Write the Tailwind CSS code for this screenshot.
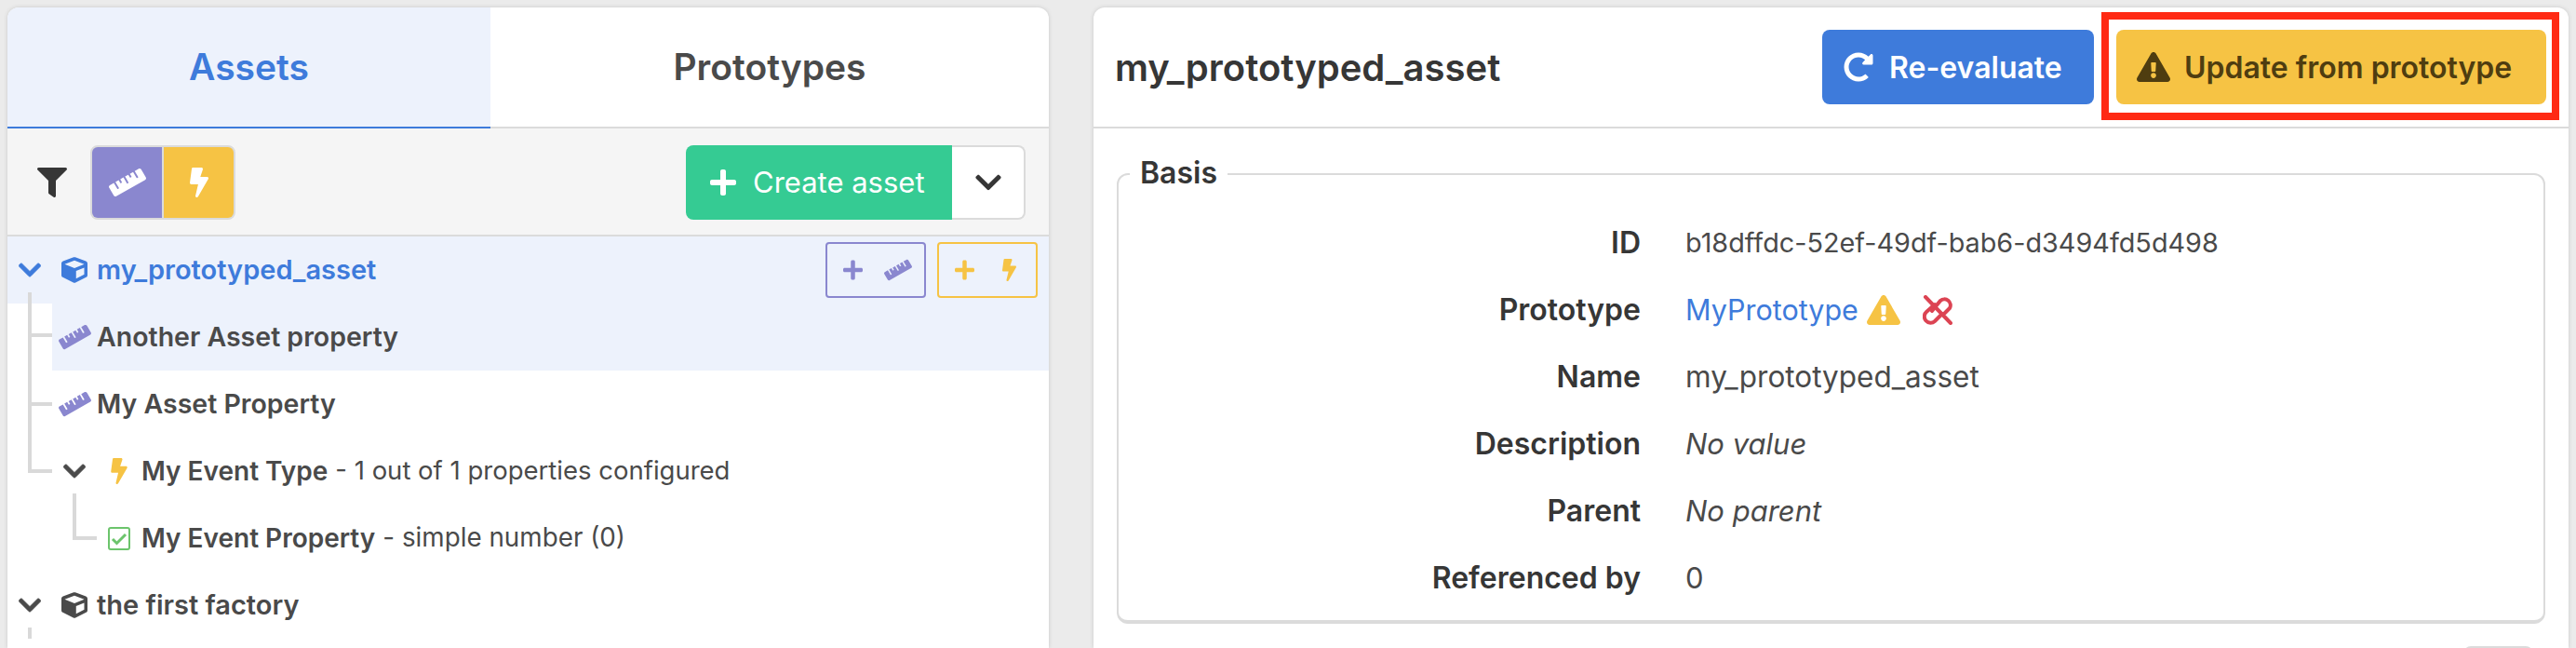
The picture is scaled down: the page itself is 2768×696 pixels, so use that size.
<!DOCTYPE html>
<html lang="en">
<head>
    <meta charset="UTF-8">
    <title>Assets</title>
    <script src="https://cdn.jsdelivr.net/npm/@tailwindcss/browser@4"></script>
</head>
<body class="bg-[#ebebeb] font-['Inter',sans-serif] text-[28px] text-[#4a4a4a]">
    <div class="flex gap-[48px] h-[696px] w-[2768px] pt-[8px] pl-[8px] overflow-hidden">

        <!-- left panel -->
        <div class="w-[1119px] bg-white rounded-t-[12px] overflow-hidden shadow-[0_0_4px_#c8c8c8]">
            <div class="flex h-[130px] text-[39px] font-semibold">
                <div class="w-[519px] flex items-center justify-center bg-[#edf2fc] text-[#3e7bdb] border-b-2 border-[#3e7bdb]">Assets</div>
                <div class="flex-1 flex items-center justify-center text-[#4a4a4a] border-b-2 border-[#dbdbdb]">Prototypes</div>
            </div>

            <div class="flex items-center h-[116px] pt-[2px] pl-[32px] pr-[25px] bg-[#f5f5f5] border-b-2 border-[#dbdbdb]">
                <svg class="w-[32px] h-[32px] fill-current text-[#363636]" viewBox="0 0 512 512"><path d="M487.976 0H24.028C2.71 0-8.047 25.866 7.058 40.971L192 225.941V432c0 7.831 3.821 15.17 10.237 19.662l80 55.98C298.02 518.69 320 507.493 320 487.98V225.941l184.947-184.97C520.021 25.896 509.338 0 487.976 0z"/></svg>
                <div class="ml-[25px] flex h-[80px] w-[156px] border-2 border-[#dbdbdb] rounded-[8px] overflow-hidden bg-[#dbdbdb] gap-[2px]">
                    <div class="flex-1 flex items-center justify-center bg-[#8a87cf]">
                        <svg class="w-[40px] h-[32px] fill-current text-white" viewBox="0 0 640 512"><path d="M635.7 167.2L556.1 31.7c-8.8-15-28.3-20.1-43.5-11.5l-69 39.1L503.3 161c2.2 3.8.9 8.5-2.9 10.7l-13.8 7.8c-3.8 2.2-8.7.9-10.9-2.9L416 75l-55.2 31.3 27.9 47.4c2.2 3.8.9 8.5-2.9 10.7l-13.8 7.8c-3.8 2.2-8.7.9-10.9-2.9L333.2 122 278 153.3 337.8 255c2.2 3.8.9 8.5-2.9 10.7l-13.8 7.8c-3.8 2.2-8.7.9-10.9-2.9l-59.7-101.7-55.2 31.3 27.9 47.4c2.2 3.8.9 8.5-2.9 10.7l-13.8 7.8c-3.8 2.2-8.7.9-10.9-2.9l-27.9-47.3-55.2 31.3 59.7 101.7c2.2 3.8.9 8.5-2.9 10.7l-13.8 7.8c-3.8 2.2-8.7.9-10.9-2.9L84.9 262.9l-69 39.1C.7 310.7-4.6 329.8 4.2 344.8l79.6 135.6c8.8 15 28.3 20.1 43.5 11.5L624.1 210c15.2-8.6 20.4-27.8 11.6-42.8z"/></svg>
                    </div>
                    <div class="flex-1 flex items-center justify-center bg-[#f6c344]">
                        <svg class="w-[20px] h-[32px] fill-current text-white" viewBox="0 0 320 512"><path d="M296 160H180.6l42.6-129.8C227.2 15 215.7 0 200 0H56C44 0 33.8 8.9 32.2 20.8l-32 240C-1.7 275.2 9.5 288 24 288h118.7L96.6 482.5c-3.6 15.2 8 29.5 23.3 29.5 8.4 0 16.4-4.4 20.8-12l176-304c9.3-15.9-2.2-36-20.7-36z"/></svg>
                    </div>
                </div>
                <div class="ml-auto flex h-[80px]">
                    <div class="w-[286px] flex items-center gap-[18px] pl-[26px] bg-[#35cb93] text-white text-[31px] rounded-l-[8px]">
                        <svg class="w-[28px] h-[32px] fill-current" viewBox="0 0 448 512"><path d="M416 208H272V64c0-17.67-14.33-32-32-32h-32c-17.67 0-32 14.33-32 32v144H32c-17.67 0-32 14.33-32 32v32c0 17.67 14.33 32 32 32h144v144c0 17.67 14.33 32 32 32h32c17.67 0 32-14.33 32-32V304h144c17.67 0 32-14.33 32-32v-32c0-17.67-14.33-32-32-32z"/></svg>
                        <span>Create asset</span>
                    </div>
                    <div class="w-[79px] flex items-center justify-center bg-white border-2 border-l-0 border-[#dbdbdb] rounded-r-[8px]">
                        <svg class="w-[28px] h-[32px] fill-current text-[#363636]" viewBox="0 0 448 512"><path d="M207.029 381.476L12.686 187.132c-9.373-9.373-9.373-24.569 0-33.941l22.667-22.667c9.357-9.357 24.522-9.375 33.901-.04L224 284.505l154.745-154.021c9.379-9.335 24.544-9.317 33.901.04l22.667 22.667c9.373 9.373 9.373 24.569 0 33.941L240.971 381.476c-9.373 9.372-24.569 9.372-33.942 0z"/></svg>
                    </div>
                </div>
            </div>

            <!-- tree -->
            <div class="font-semibold">
                <div class="relative flex items-center h-[72px] bg-[#edf2fc] text-[#3e7bdb] pl-[12px] pr-[12px]">
                    <svg class="w-[24px] h-[28px] fill-current stroke-current stroke-[14]" viewBox="0 0 448 512"><path d="M207.029 381.476L12.686 187.132c-9.373-9.373-9.373-24.569 0-33.941l22.667-22.667c9.357-9.357 24.522-9.375 33.901-.04L224 284.505l154.745-154.021c9.379-9.335 24.544-9.317 33.901.04l22.667 22.667c9.373 9.373 9.373 24.569 0 33.941L240.971 381.476c-9.373 9.372-24.569 9.372-33.942 0z"/></svg>
                    <svg class="ml-[22px] w-[28px] h-[28px] fill-current" viewBox="0 0 512 512"><path d="M239.1 6.3l-208 78c-18.7 7-31.1 25-31.1 45v225.1c0 18.2 10.3 34.8 26.5 42.9l208 104c13.5 6.8 29.4 6.8 42.9 0l208-104c16.3-8.1 26.5-24.8 26.5-42.9V129.3c0-20-12.4-37.9-31.1-44.9l-208-78C262 2.2 250 2.2 239.1 6.3zM256 68.4l192 72v1.1l-192 78-192-78v-1.1l192-72zm32 356V275.5l160-65v133.9l-160 80z"/></svg>
                    <span class="ml-[10px] text-[29px]">my_prototyped_asset</span>
                    <div class="ml-auto flex gap-[12px]">
                        <div class="w-[108px] h-[60px] flex items-center gap-[23px] pl-[17px] border-2 border-[#8a87cf] rounded-[4px] text-[#8a87cf]">
                            <svg class="w-[21px] h-[24px] fill-current" viewBox="0 0 448 512"><path d="M416 208H272V64c0-17.67-14.33-32-32-32h-32c-17.67 0-32 14.33-32 32v144H32c-17.67 0-32 14.33-32 32v32c0 17.67 14.33 32 32 32h144v144c0 17.67 14.33 32 32 32h32c17.67 0 32-14.33 32-32V304h144c17.67 0 32-14.33 32-32v-32c0-17.67-14.33-32-32-32z"/></svg>
                            <svg class="w-[30px] h-[24px] fill-current" viewBox="0 0 640 512"><path d="M635.7 167.2L556.1 31.7c-8.8-15-28.3-20.1-43.5-11.5l-69 39.1L503.3 161c2.2 3.8.9 8.5-2.9 10.7l-13.8 7.8c-3.8 2.2-8.7.9-10.9-2.9L416 75l-55.2 31.3 27.9 47.4c2.2 3.8.9 8.5-2.9 10.7l-13.8 7.8c-3.8 2.2-8.7.9-10.9-2.9L333.2 122 278 153.3 337.8 255c2.2 3.8.9 8.5-2.9 10.7l-13.8 7.8c-3.8 2.2-8.7.9-10.9-2.9l-59.7-101.7-55.2 31.3 27.9 47.4c2.2 3.8.9 8.5-2.9 10.7l-13.8 7.8c-3.8 2.2-8.7.9-10.9-2.9l-27.9-47.3-55.2 31.3 59.7 101.7c2.2 3.8.9 8.5-2.9 10.7l-13.8 7.8c-3.8 2.2-8.7.9-10.9-2.9L84.9 262.9l-69 39.1C.7 310.7-4.6 329.8 4.2 344.8l79.6 135.6c8.8 15 28.3 20.1 43.5 11.5L624.1 210c15.2-8.6 20.4-27.8 11.6-42.8z"/></svg>
                        </div>
                        <div class="w-[108px] h-[60px] flex items-center gap-[30px] pl-[17px] border-2 border-[#f6c344] rounded-[4px] text-[#f6c344]">
                            <svg class="w-[21px] h-[24px] fill-current" viewBox="0 0 448 512"><path d="M416 208H272V64c0-17.67-14.33-32-32-32h-32c-17.67 0-32 14.33-32 32v144H32c-17.67 0-32 14.33-32 32v32c0 17.67 14.33 32 32 32h144v144c0 17.67 14.33 32 32 32h32c17.67 0 32-14.33 32-32V304h144c17.67 0 32-14.33 32-32v-32c0-17.67-14.33-32-32-32z"/></svg>
                            <svg class="w-[15px] h-[24px] fill-current" viewBox="0 0 320 512"><path d="M296 160H180.6l42.6-129.8C227.2 15 215.7 0 200 0H56C44 0 33.8 8.9 32.2 20.8l-32 240C-1.7 275.2 9.5 288 24 288h118.7L96.6 482.5c-3.6 15.2 8 29.5 23.3 29.5 8.4 0 16.4-4.4 20.8-12l176-304c9.3-15.9-2.2-36-20.7-36z"/></svg>
                        </div>
                    </div>
                </div>

                <div class="relative h-[72px] pl-[48px]">
                    <span class="absolute left-[22px] top-[-12px] w-[26px] h-[48px] border-l-4 border-b-4 border-[#d9d9d9]"></span>
                    <span class="absolute left-[22px] top-[36px] h-[36px] border-l-4 border-[#d9d9d9]"></span>
                    <div class="flex items-center h-full pl-[7px] bg-[#edf2fc]">
                        <svg class="w-[35px] h-[28px] fill-current text-[#8a87cf]" viewBox="0 0 640 512"><path d="M635.7 167.2L556.1 31.7c-8.8-15-28.3-20.1-43.5-11.5l-69 39.1L503.3 161c2.2 3.8.9 8.5-2.9 10.7l-13.8 7.8c-3.8 2.2-8.7.9-10.9-2.9L416 75l-55.2 31.3 27.9 47.4c2.2 3.8.9 8.5-2.9 10.7l-13.8 7.8c-3.8 2.2-8.7.9-10.9-2.9L333.2 122 278 153.3 337.8 255c2.2 3.8.9 8.5-2.9 10.7l-13.8 7.8c-3.8 2.2-8.7.9-10.9-2.9l-59.7-101.7-55.2 31.3 27.9 47.4c2.2 3.8.9 8.5-2.9 10.7l-13.8 7.8c-3.8 2.2-8.7.9-10.9-2.9l-27.9-47.3-55.2 31.3 59.7 101.7c2.2 3.8.9 8.5-2.9 10.7l-13.8 7.8c-3.8 2.2-8.7.9-10.9-2.9L84.9 262.9l-69 39.1C.7 310.7-4.6 329.8 4.2 344.8l79.6 135.6c8.8 15 28.3 20.1 43.5 11.5L624.1 210c15.2-8.6 20.4-27.8 11.6-42.8z"/></svg>
                        <span class="ml-[6px] text-[28.500px]">Another Asset property</span>
                    </div>
                </div>

                <div class="relative h-[72px] pl-[48px]">
                    <span class="absolute left-[22px] top-0 w-[26px] h-[38px] border-l-4 border-b-4 border-[#d9d9d9]"></span>
                    <span class="absolute left-[22px] top-[38px] h-[34px] border-l-4 border-[#d9d9d9]"></span>
                    <div class="flex items-center h-full pl-[7px]">
                        <svg class="w-[35px] h-[28px] fill-current text-[#8a87cf]" viewBox="0 0 640 512"><path d="M635.7 167.2L556.1 31.7c-8.8-15-28.3-20.1-43.5-11.5l-69 39.1L503.3 161c2.2 3.8.9 8.5-2.9 10.7l-13.8 7.8c-3.8 2.2-8.7.9-10.9-2.9L416 75l-55.2 31.3 27.9 47.4c2.2 3.8.9 8.5-2.9 10.7l-13.8 7.8c-3.8 2.2-8.7.9-10.9-2.9L333.2 122 278 153.3 337.8 255c2.2 3.8.9 8.5-2.9 10.7l-13.8 7.8c-3.8 2.2-8.7.9-10.9-2.9l-59.7-101.7-55.2 31.3 27.9 47.4c2.2 3.8.9 8.5-2.9 10.7l-13.8 7.8c-3.8 2.2-8.7.9-10.9-2.9l-27.9-47.3-55.2 31.3 59.7 101.7c2.2 3.8.9 8.5-2.9 10.7l-13.8 7.8c-3.8 2.2-8.7.9-10.9-2.9L84.9 262.9l-69 39.1C.7 310.7-4.6 329.8 4.2 344.8l79.6 135.6c8.8 15 28.3 20.1 43.5 11.5L624.1 210c15.2-8.6 20.4-27.8 11.6-42.8z"/></svg>
                        <span class="ml-[6px] text-[28.500px]">My Asset Property</span>
                    </div>
                </div>

                <div class="relative h-[72px] pl-[60px]">
                    <span class="absolute left-[22px] top-0 w-[26px] h-[38px] border-l-4 border-b-4 border-[#d9d9d9]"></span>
                    <div class="flex items-center h-full">
                        <svg class="w-[24px] h-[28px] fill-current stroke-current stroke-[14]" viewBox="0 0 448 512"><path d="M207.029 381.476L12.686 187.132c-9.373-9.373-9.373-24.569 0-33.941l22.667-22.667c9.357-9.357 24.522-9.375 33.901-.04L224 284.505l154.745-154.021c9.379-9.335 24.544-9.317 33.901.04l22.667 22.667c9.373 9.373 9.373 24.569 0 33.941L240.971 381.476c-9.373 9.372-24.569 9.372-33.942 0z"/></svg>
                        <svg class="ml-[27px] w-[18px] h-[28px] fill-current text-[#f6c344]" viewBox="0 0 320 512"><path d="M296 160H180.6l42.6-129.8C227.2 15 215.7 0 200 0H56C44 0 33.8 8.9 32.2 20.8l-32 240C-1.7 275.2 9.5 288 24 288h118.7L96.6 482.5c-3.6 15.2 8 29.5 23.3 29.5 8.4 0 16.4-4.4 20.8-12l176-304c9.3-15.9-2.2-36-20.7-36z"/></svg>
                        <span class="ml-[15px]">My Event Type</span>
                        <span class="ml-[8px] font-normal text-[27.500px]">- 1 out of 1 properties configured</span>
                    </div>
                </div>

                <div class="relative h-[72px] pl-[108px]">
                    <span class="absolute left-[70px] top-[-12px] w-[26px] h-[50px] border-l-4 border-b-4 border-[#d9d9d9]"></span>
                    <div class="flex items-center h-full">
                        <svg class="w-[24px] h-[25px]" viewBox="0 0 24 25" fill="none"><rect x="1" y="1" width="22" height="23" rx="2" stroke="#6cc46c" stroke-width="2"/><path d="M5 13l4.500 4.500L19 8" stroke="#6cc46c" stroke-width="3"/></svg>
                        <span class="ml-[12px]">My Event Property</span>
                        <span class="ml-[8px] font-normal text-[27.800px]">- simple number (0)</span>
                    </div>
                </div>

                <div class="relative flex items-center h-[72px] pl-[12px]">
                    <span class="absolute left-[22px] top-[60px] h-[12px] border-l-4 border-[#d9d9d9]"></span>
                    <svg class="w-[24px] h-[28px] fill-current stroke-current stroke-[14]" viewBox="0 0 448 512"><path d="M207.029 381.476L12.686 187.132c-9.373-9.373-9.373-24.569 0-33.941l22.667-22.667c9.357-9.357 24.522-9.375 33.901-.04L224 284.505l154.745-154.021c9.379-9.335 24.544-9.317 33.901.04l22.667 22.667c9.373 9.373 9.373 24.569 0 33.941L240.971 381.476c-9.373 9.372-24.569 9.372-33.942 0z"/></svg>
                    <svg class="ml-[22px] w-[28px] h-[28px] fill-current" viewBox="0 0 512 512"><path d="M239.1 6.3l-208 78c-18.7 7-31.1 25-31.1 45v225.1c0 18.2 10.3 34.8 26.5 42.9l208 104c13.5 6.8 29.4 6.8 42.9 0l208-104c16.3-8.1 26.5-24.8 26.5-42.9V129.3c0-20-12.4-37.9-31.1-44.9l-208-78C262 2.2 250 2.2 239.1 6.3zM256 68.4l192 72v1.1l-192 78-192-78v-1.1l192-72zm32 356V275.5l160-65v133.9l-160 80z"/></svg>
                    <span class="ml-[10px] text-[29px]">the first factory</span>
                </div>
            </div>
        </div>

        <!-- right panel -->
        <div class="relative w-[1585px] flex flex-col bg-white rounded-t-[12px] overflow-hidden shadow-[0_0_4px_#c8c8c8]">
            <div class="flex items-center h-[130px] shrink-0 pl-[23px] pr-[24px] border-b-2 border-[#dbdbdb]">
                <h1 class="pt-[2px] text-[40px] font-semibold text-[#363636]">my_prototyped_asset</h1>
                <div class="ml-auto flex gap-[24px] font-semibold text-[32px]">
                    <div class="w-[292px] h-[80px] flex items-center gap-[17px] pl-[23px] bg-[#3e7bdb] text-white rounded-[8px]">
                        <svg class="w-[32px] h-[32px] fill-current" viewBox="0 0 512 512"><path d="M256.455 8c66.269.119 126.437 26.233 170.859 68.685l35.715-35.715C478.149 25.851 504 36.559 504 57.941V192c0 13.255-10.745 24-24 24H345.941c-21.382 0-32.09-25.851-16.971-40.971l41.75-41.75c-30.864-28.899-70.801-44.907-113.23-45.273-92.398-.798-170.283 73.977-169.484 169.442C88.764 348.009 162.184 424 256 424c41.127 0 79.997-14.678 110.629-41.556 4.743-4.161 11.906-3.908 16.368.553l39.662 39.662c4.872 4.872 4.631 12.815-.482 17.433C378.202 479.813 319.926 504 256 504 119.034 504 8.001 392.967 8 256.002 7.999 119.193 119.646 7.755 256.455 8z"/></svg>
                        <span class="pt-[2px]">Re-evaluate</span>
                    </div>
                    <div class="w-[462px] h-[80px] flex items-center gap-[15px] pl-[22px] bg-[#f6c344] text-[#4f3d10] rounded-[8px]">
                        <svg class="w-[36px] h-[32px] fill-current" viewBox="0 0 576 512"><path d="M569.517 440.013C587.975 472.007 564.806 512 527.94 512H48.054c-36.937 0-59.999-40.055-41.577-71.987L246.423 24.035c18.467-32.009 64.72-31.951 83.154 0l239.94 416.978zM288 354c-25.405 0-46 20.595-46 46s20.595 46 46 46 46-20.595 46-46-20.595-46-46-46zm-43.673-165.346l7.418 136c.347 6.364 5.609 11.346 11.982 11.346h48.546c6.373 0 11.635-4.982 11.982-11.346l7.418-136c.375-6.874-5.098-12.654-11.982-12.654h-63.383c-6.884 0-12.356 5.78-11.981 12.654z"/></svg>
                        <span class="pt-[2px]">Update from prototype</span>
                    </div>
                </div>
            </div>

            <!-- highlight round the update button -->
            <div class="absolute left-[1083px] top-[5px] w-[492px] h-[116px] border-[8px] border-[#ff2a14]"></div>

            <div class="relative shrink-0 ml-[25px] mr-[25px] mt-[48px] h-[484px] pt-[37px] border-2 border-b-4 border-[#dbdbdb] rounded-[12px] text-[31px]">
                <div class="absolute left-[12px] top-[-22px] px-[11px] bg-white font-semibold text-[32px] text-[#363636] leading-[40px]">Basis</div>
                <div class="flex items-center h-[72px]"><div class="w-[561px] text-right font-semibold text-[32px] text-[#363636]">ID</div><div class="ml-[48px] text-[28.800px]">b18dffdc-52ef-49df-bab6-d3494fd5d498</div></div>
                <div class="flex items-center h-[72px]">
                    <div class="w-[561px] text-right font-semibold text-[32px] text-[#363636]">Prototype</div>
                    <div class="ml-[48px] text-[30.500px] text-[#3e7bdb]">MyPrototype</div>
                    <svg class="ml-[9px] w-[36px] h-[32px] fill-current text-[#f6c344]" viewBox="0 0 576 512"><path d="M569.517 440.013C587.975 472.007 564.806 512 527.94 512H48.054c-36.937 0-59.999-40.055-41.577-71.987L246.423 24.035c18.467-32.009 64.72-31.951 83.154 0l239.94 416.978zM288 354c-25.405 0-46 20.595-46 46s20.595 46 46 46 46-20.595 46-46-20.595-46-46-46zm-43.673-165.346l7.418 136c.347 6.364 5.609 11.346 11.982 11.346h48.546c6.373 0 11.635-4.982 11.982-11.346l7.418-136c.375-6.874-5.098-12.654-11.982-12.654h-63.383c-6.884 0-12.356 5.78-11.981 12.654z"/></svg>
                    <svg class="ml-[24px] w-[32px] h-[32px]" viewBox="0 0 32 32" fill="none" stroke="#dc4453" stroke-width="4" stroke-linecap="round"><path d="M3 2l27 28"/><path d="M10 17L19 6a6.500 6.500 0 0 1 10 8l-5 5"/><path d="M13 10l-9 8a6 6 0 0 0 9 10l8-8"/></svg>
                </div>
                <div class="flex items-center h-[72px]"><div class="w-[561px] text-right font-semibold text-[32px] text-[#363636]">Name</div><div class="ml-[48px] text-[31.500px]">my_prototyped_asset</div></div>
                <div class="flex items-center h-[72px]"><div class="w-[561px] text-right font-semibold text-[32px] text-[#363636]">Description</div><div class="ml-[48px] italic">No value</div></div>
                <div class="flex items-center h-[72px]"><div class="w-[561px] text-right font-semibold text-[32px] text-[#363636]">Parent</div><div class="ml-[48px] italic">No parent</div></div>
                <div class="flex items-center h-[72px]"><div class="w-[561px] text-right font-semibold text-[32px] text-[#363636]">Referenced by</div><div class="ml-[48px]">0</div></div>
            </div>

            <div class="shrink-0 self-end mt-[24px] mr-[38px] w-[75px] h-[60px] border-2 border-[#dbdbdb] rounded-[8px]"></div>
        </div>
    </div>
</body>
</html>
